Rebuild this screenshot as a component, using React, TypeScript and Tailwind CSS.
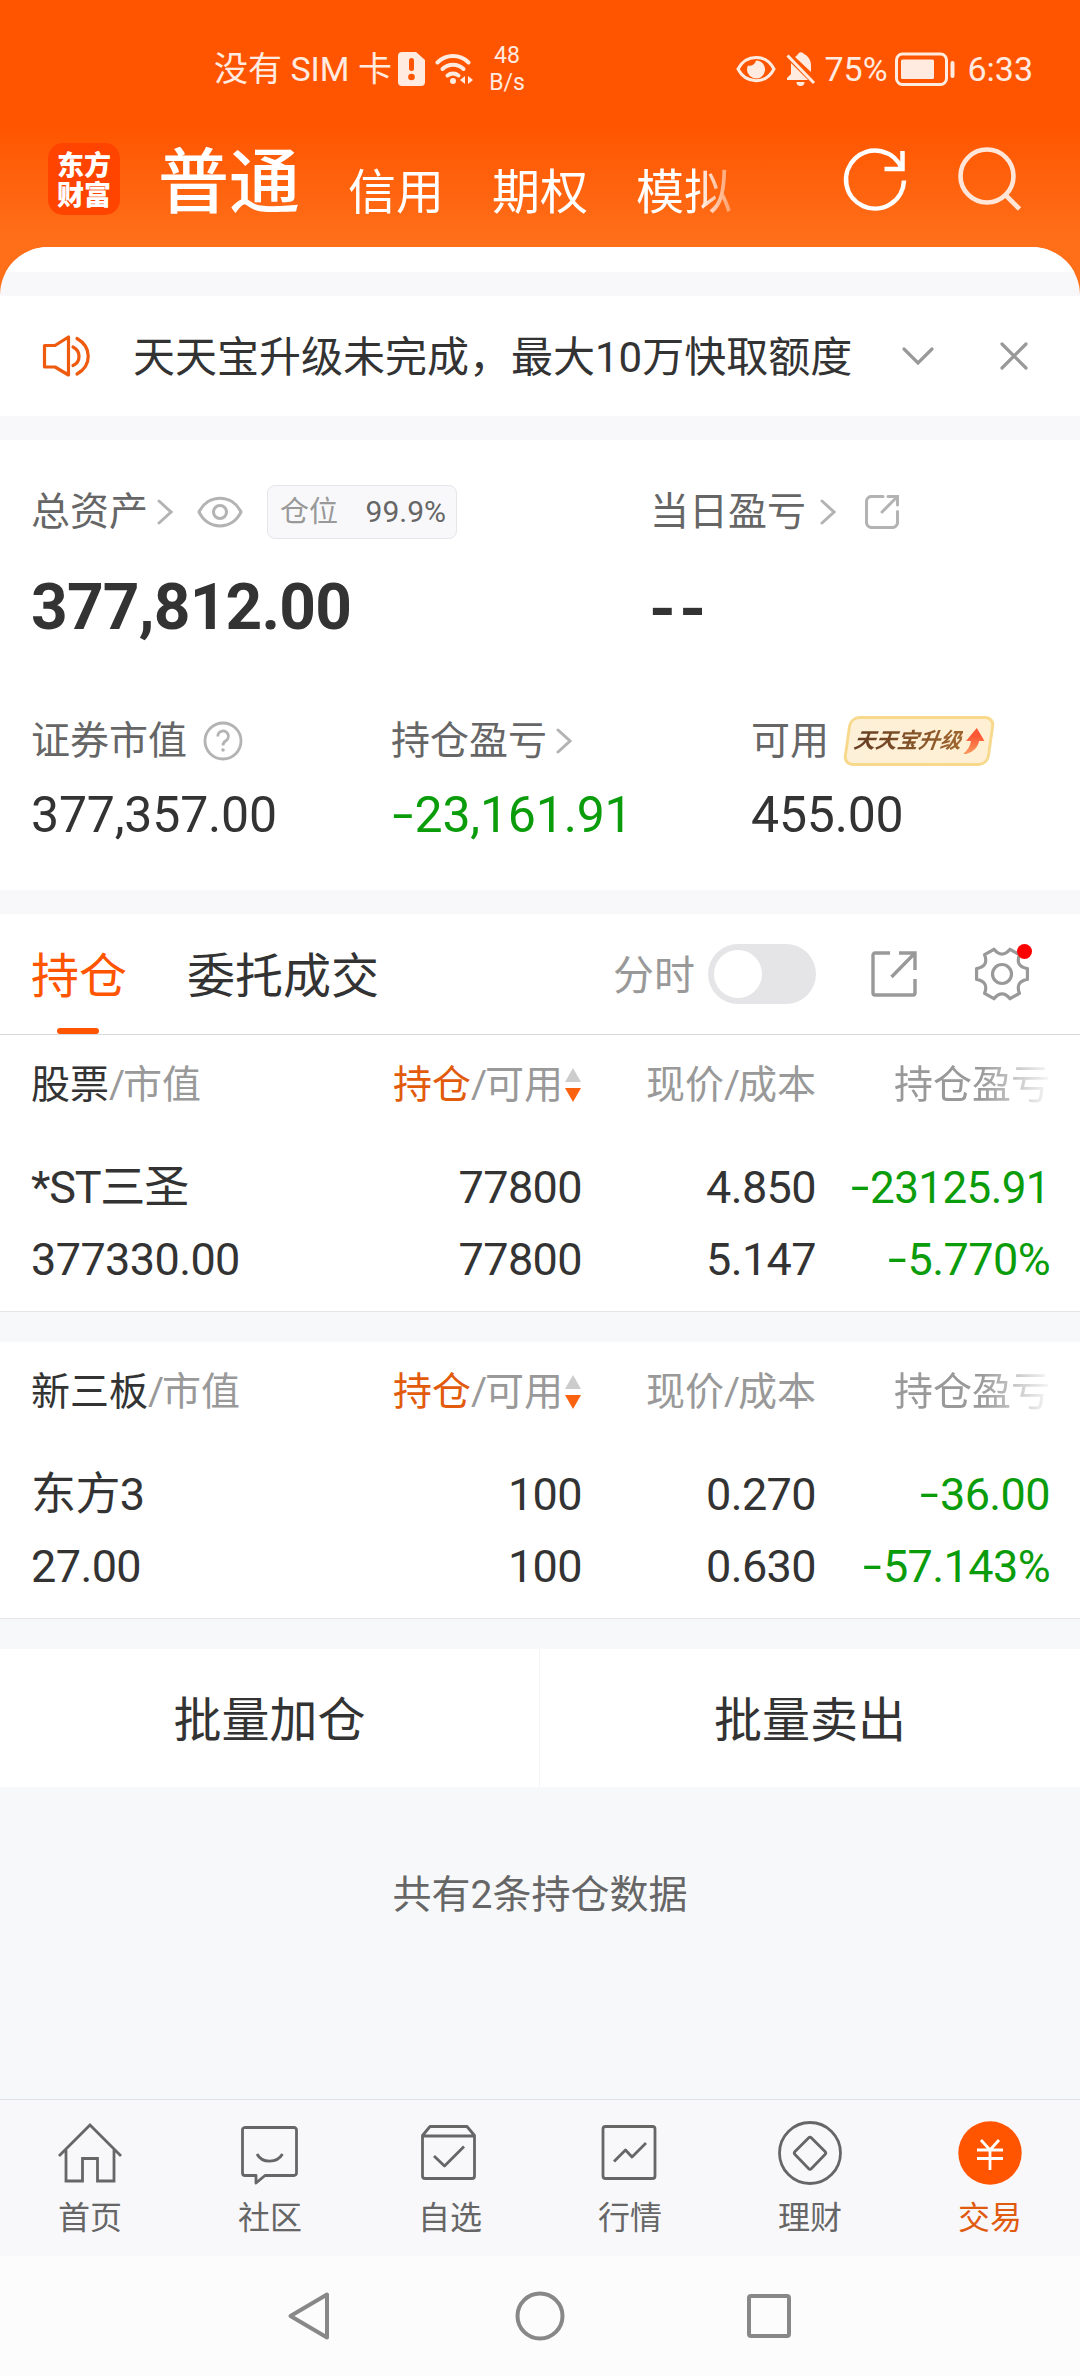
import type { ReactNode } from "react";

interface HoldingRow {
  name: string;
  marketValue: string;
  amount: string;
  available: string;
  price: string;
  cost: string;
  profit: string;
  profitRate: string;
  compact?: boolean;
}

interface IconProps {
  className?: string;
}

const accountTabs = ["信用", "期权", "模拟"];

const stockRow: HoldingRow = {
  name: "*ST三圣",
  marketValue: "377330.00",
  amount: "77800",
  available: "77800",
  price: "4.850",
  cost: "5.147",
  profit: "-23125.91",
  profitRate: "-5.770%",
  compact: true,
};

const neeqRow: HoldingRow = {
  name: "东方3",
  marketValue: "27.00",
  amount: "100",
  available: "100",
  price: "0.270",
  cost: "0.630",
  profit: "-36.00",
  profitRate: "-57.143%",
};

// six teeth, corners at +-12deg, concave valleys in between
function gearPath() {
  const point = (deg: number, r: number) => {
    const rad = (deg * Math.PI) / 180;
    return `${(28 + r * Math.cos(rad)).toFixed(2)} ${(28 + r * Math.sin(rad)).toFixed(2)}`;
  };
  let d = `M${point(-12, 26)}`;
  for (let a = 0; a < 360; a += 60) {
    d += ` L${point(a + 12, 26)} Q${point(a + 30, 15)} ${point(a + 48, 26)}`;
  }
  return `${d} Z`;
}

// the font's hyphen is too short for a minus sign, so it is widened
function Minus() {
  return (
    <span className="relative -top-[0.03em] inline-block w-[0.47em] text-center">
      <span className="inline-block scale-x-150">-</span>
    </span>
  );
}

function Signed({ value }: { value: string }) {
  return (
    <>
      {value.startsWith("-") && <Minus />}
      {value.replace(/^-/, "")}
    </>
  );
}

function ChevronRight({ className = "" }: IconProps) {
  return (
    <svg viewBox="0 0 16 26" className={`h-[26px] w-4 shrink-0 ${className}`} fill="none" stroke="#b3b3b3" strokeWidth="3" strokeLinecap="round">
      <path d="M2 2 L14 13 L2 24" />
    </svg>
  );
}

function StatusBar() {
  return (
    <div className="flex h-[130px] pt-[42px] text-[34px] leading-[54px] text-[#ffebe0]">
      <div className="flex h-[54px] items-center pl-[214px]">
        <span className="w-[184px] whitespace-nowrap">没有 SIM 卡</span>
        <svg viewBox="0 0 27 34" className="h-[34px] w-[27px]">
          <path d="M4 0H18L27 8V30a4 4 0 0 1-4 4H4a4 4 0 0 1-4-4V4a4 4 0 0 1 4-4Z" fill="#ffebe0" />
          <rect x="11" y="6" width="5" height="13" rx="2.5" fill="#ff5500" />
          <circle cx="13.500" cy="25" r="3.300" fill="#ff5500" />
        </svg>
        <svg viewBox="0 0 40 34" className="ml-[10px] h-[34px] w-10" fill="none" stroke="#ffebe0" strokeWidth="4" strokeLinecap="round">
          <path d="M2.500 10.500a22 22 0 0 1 31 0" />
          <path d="M7.500 17a15 15 0 0 1 21 0" />
          <path d="M12.500 23.500a9 9 0 0 1 11 0" />
          <circle cx="18" cy="29" r="3" fill="#ffebe0" stroke="none" />
          <path d="M30 24v8l-5-4ZM33 24v8l5-4Z" fill="#ffebe0" stroke="none" />
        </svg>
        <div className="ml-3 w-[40px] text-center text-[23px] leading-[27px]">
          <div>48</div>
          <div>B/s</div>
        </div>
      </div>
      <div className="ml-auto flex h-[54px] items-center pr-[47px]">
        <svg viewBox="0 0 40 28" className="h-7 w-10" fill="none" stroke="#ffebe0">
          <path d="M2 14C10 -1.500 30 -1.500 38 14C30 29.500 10 29.500 2 14Z" strokeWidth="3" />
          <path d="M12 10.500A9 9 0 1 0 20 5.500A6.500 6.500 0 0 1 12 10.500Z" fill="#ffebe0" stroke="none" />
        </svg>
        <svg viewBox="0 0 30 34" className="ml-[10px] h-[34px] w-[30px]" fill="#ffebe0">
          <path d="M9 5C11 3.500 11.500 3 12 2a3.500 3.500 0 0 1 6 0C22 4 25 8 25 13v7Z" />
          <path d="M5 11L22 28H1v-2l4-4Z" />
          <path d="M10.500 30h8a4 4 0 0 1-8 0Z" />
          <path d="M1.500 3.500L28 31" stroke="#ffebe0" strokeWidth="3" />
        </svg>
        <span className="ml-[8px] w-[71px]">75%</span>
        <svg viewBox="0 0 60 34" className="h-[34px] w-[60px]">
          <rect x="1.500" y="2" width="50" height="30.500" rx="6" fill="none" stroke="#ffebe0" strokeWidth="3" />
          <rect x="6" y="7.500" width="33" height="19.500" rx="1.500" fill="#ffebe0" />
          <rect x="55.500" y="9" width="4" height="17" rx="2" fill="#ffebe0" />
        </svg>
        <span className="ml-[12px]">6:33</span>
      </div>
    </div>
  );
}

function AccountHeader() {
  return (
    <div className="flex h-[117px] text-white">
      <div className="ml-12 mt-[13px] h-[72px] w-[72px] rounded-[15px] bg-[#ff4400] px-[9px] pt-[6px] font-['Noto_Sans_CJK_SC',sans-serif] text-[27px] font-black leading-[30px]">
        东方财富
      </div>
      <div className="ml-[38px] flex h-[104px] items-baseline whitespace-nowrap pt-px text-5xl leading-[104px]">
        <span className="text-[71px] font-medium">普通</span>
        <div className="ml-[48px] flex w-[392px] translate-y-0.5 gap-12 overflow-hidden [mask-image:linear-gradient(to_right,#000_348px,transparent_404px)]">
          {accountTabs.map((tab) => (
            <span key={tab}>{tab}</span>
          ))}
        </div>
      </div>
      <svg viewBox="0 0 66 66" className="ml-[102px] mt-[17px] h-[66px] w-[66px] shrink-0" fill="none" stroke="#fff" strokeWidth="4.500">
        <path d="M62 33.500A29 29 0 1 1 60 22" />
        <path d="M60.500 4V22H42.500" />
      </svg>
      <svg viewBox="0 0 66 66" className="ml-[48px] mt-[15px] h-[66px] w-[66px] shrink-0" fill="none" stroke="#ffe6d8" strokeWidth="4.600">
        <circle cx="31" cy="31" r="26.500" />
        <path d="M49 49.500L63.500 64" />
      </svg>
    </div>
  );
}

function NoticeBar() {
  return (
    <div className="flex h-[120px] items-center bg-white">
      <svg viewBox="0 0 50 44" className="ml-[42px] h-11 w-[50px]" fill="none" stroke="#ee5a0e" strokeWidth="3.200" strokeLinejoin="round" strokeLinecap="round">
        <path d="M2.500 11.500H13L26.500 3V41L13 33H2.500Z" />
        <path d="M31 13C39 17 39 28 31 31.500" />
        <path d="M35 4.500C50 13 50 31.500 35 40" />
      </svg>
      <p className="ml-[41px] w-[768px] whitespace-nowrap pt-[3px] text-[42px] text-[#333]">
        天天宝升级未完成，最大10万快取额度
      </p>
      <svg viewBox="0 0 34 20" className="h-5 w-[34px]" fill="none" stroke="#999" strokeWidth="3.200" strokeLinecap="round">
        <path d="M3 3L17 17L31 3" />
      </svg>
      <svg viewBox="0 0 30 30" className="ml-[64px] h-[30px] w-[30px]" fill="none" stroke="#999" strokeWidth="3.200" strokeLinecap="round">
        <path d="M3 3L27 27M27 3L3 27" />
      </svg>
    </div>
  );
}

function AssetSummary() {
  return (
    <div className="h-[450px] bg-white pl-[31px] pt-[44px] text-[#333]">
      <div className="flex h-14 items-center text-[39px] leading-none text-[#666]">
        <div className="flex w-[619px] items-center">
          <span>总资产</span>
          <ChevronRight className="ml-[9px]" />
          <svg viewBox="0 0 46 32" className="ml-[24px] h-8 w-[46px]" fill="none" stroke="#b3b3b3" strokeWidth="3">
            <path d="M2 16C11 -2.500 35 -2.500 44 16C35 34.500 11 34.500 2 16Z" />
            <circle cx="23" cy="16" r="6.500" />
          </svg>
          <div className="ml-[24px] flex h-[54px] w-[190px] items-center justify-between rounded-lg border border-[#e5e6ea] bg-[#f8f8fb] pl-3 pr-[10px]">
            <span className="text-[29px] text-[#999]">仓位</span>
            <span className="text-[30px]">99.9%</span>
          </div>
        </div>
        <span>当日盈亏</span>
        <ChevronRight className="ml-[14px]" />
        <svg viewBox="0 0 34 34" className="ml-[29px] h-[34px] w-[34px]" fill="none" stroke="#b3b3b3" strokeWidth="3">
          <path d="M18 1.500H7A5 5 0 0 0 1.500 7V27A5 5 0 0 0 7 32.500H27A5 5 0 0 0 32.500 27V16.500" strokeLinecap="round" />
          <path d="M23 1.500H32.500V10M32 2L17 17" strokeLinecap="round" />
        </svg>
      </div>

      <div className="mt-[38px] flex h-[60px] items-center text-[64px] font-bold leading-[60px]">
        <span className="w-[618px] tracking-[-0.8px]">377,812.00</span>
        <span className="origin-left translate-y-0.5 scale-x-[1.07] tracking-[3px]">--</span>
      </div>

      <div className="mt-[78px] grid h-[50px] grid-cols-[360px_360px_1fr] text-[39px] leading-[50px] text-[#666]">
        <div className="flex items-center">
          <span>证券市值</span>
          <svg viewBox="0 0 40 40" className="ml-[16px] h-10 w-10" fill="none" stroke="#b3b3b3" strokeWidth="2.800">
            <circle cx="20" cy="20" r="18" />
            <path d="M14.800 15.500A5.300 5.300 0 1 1 22.500 20C20.500 21.300 20 22.300 20 24.500" />
            <circle cx="20" cy="29" r="1.800" fill="#b3b3b3" stroke="none" />
          </svg>
        </div>
        <div className="flex items-center">
          <span>持仓盈亏</span>
          <ChevronRight className="ml-[9px]" />
        </div>
        <div className="flex items-center">
          <span>可用</span>
          <div className="relative ml-[17px] flex h-[50px] w-[146px] -skew-x-[8deg] items-center rounded-[10px] border-[3px] border-[#f8d98c] bg-linear-to-r from-[#fdf0d8] to-[#fff0d4] pl-[5px]">
            <span className="whitespace-nowrap bg-linear-to-r from-[#633c20] to-[#a0662f] bg-clip-text text-[21.500px] font-bold italic leading-[40px] text-transparent">
              天天宝升级
            </span>
            <svg viewBox="0 0 20 26" className="ml-[3px] h-[26px] w-5">
              <defs>
                <linearGradient id="upgradeArrow" x1="0" y1="0" x2="0" y2="1">
                  <stop offset="0.300" stopColor="#fc5634" />
                  <stop offset="1" stopColor="#fb9a5e" />
                </linearGradient>
              </defs>
              <path d="M10 0L19.500 13H14C14 19 10 24 3 26H0C4 22 6 18 6 13H1Z" fill="url(#upgradeArrow)" />
            </svg>
          </div>
        </div>
      </div>

      <div className="mt-6 grid h-[50px] grid-cols-[360px_360px_1fr] text-[50px] leading-[50px] tracking-[-0.2px]">
        <span>377,357.00</span>
        <span className="text-[#0a9c0a]">
          <Signed value="-23,161.91" />
        </span>
        <span>455.00</span>
      </div>
    </div>
  );
}

function PositionTabs() {
  return (
    <div className="flex h-[121px] items-center border-b border-[#d9d9dc] bg-white pl-[31px] text-5xl text-[#333]">
      <div className="relative flex h-full items-center pt-[5px] text-[#ff5500]">
        持仓
        <span className="absolute bottom-0 left-[26px] h-1.5 w-[42px] rounded-full bg-[#ff5500]" />
      </div>
      <span className="ml-[60px] pt-[5px]">委托成交</span>
      <span className="ml-[234px] pt-1 text-[41px] text-[#999]">分时</span>
      <div className="ml-[13px] flex h-[60px] w-[108px] items-center rounded-full bg-[#e5e5e7] pl-1.5">
        <span className="h-12 w-12 rounded-full bg-white" />
      </div>
      <svg viewBox="0 0 46 46" className="ml-[55px] h-[46px] w-[46px]" fill="none" stroke="#999" strokeWidth="3.400">
        <path d="M19 2H4A2 2 0 0 0 2 4V42A2 2 0 0 0 4 44H42A2 2 0 0 0 44 42V28" />
        <path d="M28 2H44V19M43.500 2.500L20.500 26" />
      </svg>
      <div className="relative ml-[57px]">
        <svg viewBox="0 0 56 56" className="h-14 w-14" fill="none" stroke="#999" strokeWidth="3.200" strokeLinejoin="round">
          <path d={gearPath()} />
          <circle cx="28" cy="28" r="9.500" />
        </svg>
        <span className="absolute -right-[2px] -top-[2px] h-[15px] w-[15px] rounded-full bg-[#ff0000]" />
      </div>
    </div>
  );
}

function TableRow({ className = "", children }: { className?: string; children: ReactNode }) {
  return (
    <div className={`grid grid-cols-[315px_236px_234px_234px] whitespace-nowrap pl-[31px] [&>*:not(:first-child)]:text-right ${className}`}>
      {children}
    </div>
  );
}

function Slash() {
  return <span className="tracking-[-2px]">/</span>;
}

function HoldingTable({ title, row }: { title: string; row: HoldingRow }) {
  return (
    <div className="flex flex-col border-b border-[#e6e6e9] bg-white text-[45px] text-[#333]">
      <TableRow className="mt-[25px] h-[50px] text-[39px] leading-[50px] text-[#999]">
        <div>
          <span className="text-[#333]">{title}</span>
          <Slash />
          市值
        </div>
        <div className="flex items-center justify-end">
          <span className="text-[#e25a0c]">持仓</span>
          <Slash />
          可用
          <svg viewBox="0 0 16 34" className="ml-0.5 mr-px h-[34px] w-4">
            <path d="M8 0L16 14H0Z" fill="#ccc" />
            <path d="M0 20H16L8 34Z" fill="#fb6210" />
          </svg>
        </div>
        <div>
          现价
          <Slash />
          成本
        </div>
        <div className="[mask-image:linear-gradient(to_right,#000_165px,transparent_240px)]">持仓盈亏</div>
      </TableRow>
      <TableRow className="mt-[51px] h-[54px] leading-[54px] tracking-[-0.6px]">
        <div className={row.compact ? "tracking-[-1.2px]" : ""}>{row.name}</div>
        <div>{row.amount}</div>
        <div>{row.price}</div>
        <div className={`text-[#0a9c0a] ${row.compact ? "text-[44px]" : ""}`}>
          <Signed value={row.profit} />
        </div>
      </TableRow>
      <TableRow className="mb-[24px] mt-[18px] h-[54px] leading-[54px] tracking-[-0.6px]">
        <div>{row.marketValue}</div>
        <div>{row.available}</div>
        <div>{row.cost}</div>
        <div className="text-[#0a9c0a]">
          <Signed value={row.profitRate} />
        </div>
      </TableRow>
    </div>
  );
}

function NavItem({ label, active = false, children }: { label: string; active?: boolean; children: ReactNode }) {
  return (
    <div className={`flex flex-col items-center text-[32px] leading-10 ${active ? "text-[#e05a10]" : "text-[#666]"}`}>
      <svg viewBox="0 0 66 66" className="h-[66px] w-[66px]" fill="none" stroke="#666" strokeWidth="2.800" strokeLinejoin="round">
        {children}
      </svg>
      <span className="mt-[12px]">{label}</span>
    </div>
  );
}

function BottomNav() {
  return (
    <div className="grid h-[157px] grid-cols-6 border-t border-[#dfe1e5] bg-[#f8f8fb] pt-[20px]">
      <NavItem label="首页">
        <path d="M2 36L33 5L64 36M9 30V61H25.500V38.500H40.500V61H57V30" strokeLinejoin="miter" />
      </NavItem>
      <NavItem label="社区">
        <path d="M7.500 7.500H57A2.500 2.500 0 0 1 59.500 10V53A2.500 2.500 0 0 1 57 55.500H28L19 63V55.500H8A2.500 2.500 0 0 1 5.500 53V10A2.500 2.500 0 0 1 7.500 7.500Z" />
        <path d="M20 34C25 43.500 40 43.500 45.500 34" />
      </NavItem>
      <NavItem label="自选">
        <path d="M5.500 15.500L13 6.500H50L57.500 15.500V56A2.500 2.500 0 0 1 55 58.500H8A2.500 2.500 0 0 1 5.500 56ZM5.500 16H57.500" />
        <path d="M17 36L27.500 46L47 26.500" />
      </NavItem>
      <NavItem label="行情">
        <rect x="6" y="6.500" width="52" height="52" rx="2.500" />
        <path d="M17 41.500L28.500 30L35 37L49 23" />
      </NavItem>
      <NavItem label="理财">
        <circle cx="33" cy="33" r="30.500" />
        <path d="M31.500 18Q33 16.500 34.500 18L48 31.500Q49.500 33 48 34.500L34.500 48.500Q33 50 31.500 48.500L18 34.500Q16.500 33 18 31.500Z" />
      </NavItem>
      <NavItem label="交易" active>
        <circle cx="33" cy="33" r="31.700" fill="#ff5500" stroke="none" />
        <path d="M24 20L33 30L42 20M33 29V50M20 30H46M20 38.500H46" stroke="#fff" />
      </NavItem>
    </div>
  );
}

function SystemNav() {
  return (
    <div className="flex h-[120px] items-center bg-[#fcfcfc] pl-[283px]">
      <svg viewBox="0 0 52 52" className="h-[52px] w-[52px]" fill="none" stroke="#888" strokeWidth="4" strokeLinejoin="round">
        <path d="M44 4.500V47.500L7.500 26Z" />
      </svg>
      <svg viewBox="0 0 52 52" className="ml-[179px] h-[52px] w-[52px]" fill="none" stroke="#888" strokeWidth="4">
        <circle cx="26" cy="26" r="22.500" />
      </svg>
      <svg viewBox="0 0 52 52" className="ml-[177px] h-[52px] w-[52px]" fill="none" stroke="#888" strokeWidth="4">
        <rect x="6" y="6" width="40" height="40" rx="2" />
      </svg>
    </div>
  );
}

export default function App() {
  return (
    <div className="flex h-[2376px] w-[1080px] flex-col overflow-hidden bg-[#f7f8fa] font-[Roboto,'Noto_Sans_CJK_SC',sans-serif]">
      <div className="bg-[linear-gradient(to_bottom,#ff5500_125px,#ff6f1a_240px)]">
        <StatusBar />
        <AccountHeader />
        <div className="overflow-hidden rounded-t-[48px] bg-[#f8f8fb]">
          <div className="h-[25px] bg-white" />
          <div className="h-6" />
        </div>
      </div>
      <NoticeBar />
      <div className="h-6 bg-[#f8f8fb]" />
      <AssetSummary />
      <div className="h-6 bg-[#f8f8fb]" />
      <PositionTabs />
      <HoldingTable title="股票" row={stockRow} />
      <div className="h-[30px]" />
      <HoldingTable title="新三板" row={neeqRow} />
      <div className="h-[30px]" />
      <div className="grid h-[138px] grid-cols-2 bg-white text-center text-5xl leading-[144px] text-[#333]">
        <div className="h-[138px] border-r border-[#f4f4f6]">批量加仓</div>
        <div>批量卖出</div>
      </div>
      <p className="mt-[78px] text-center text-[39px] leading-[60px] text-[#666]">共有2条持仓数据</p>
      <div className="mt-auto">
        <BottomNav />
        <SystemNav />
      </div>
    </div>
  );
}
